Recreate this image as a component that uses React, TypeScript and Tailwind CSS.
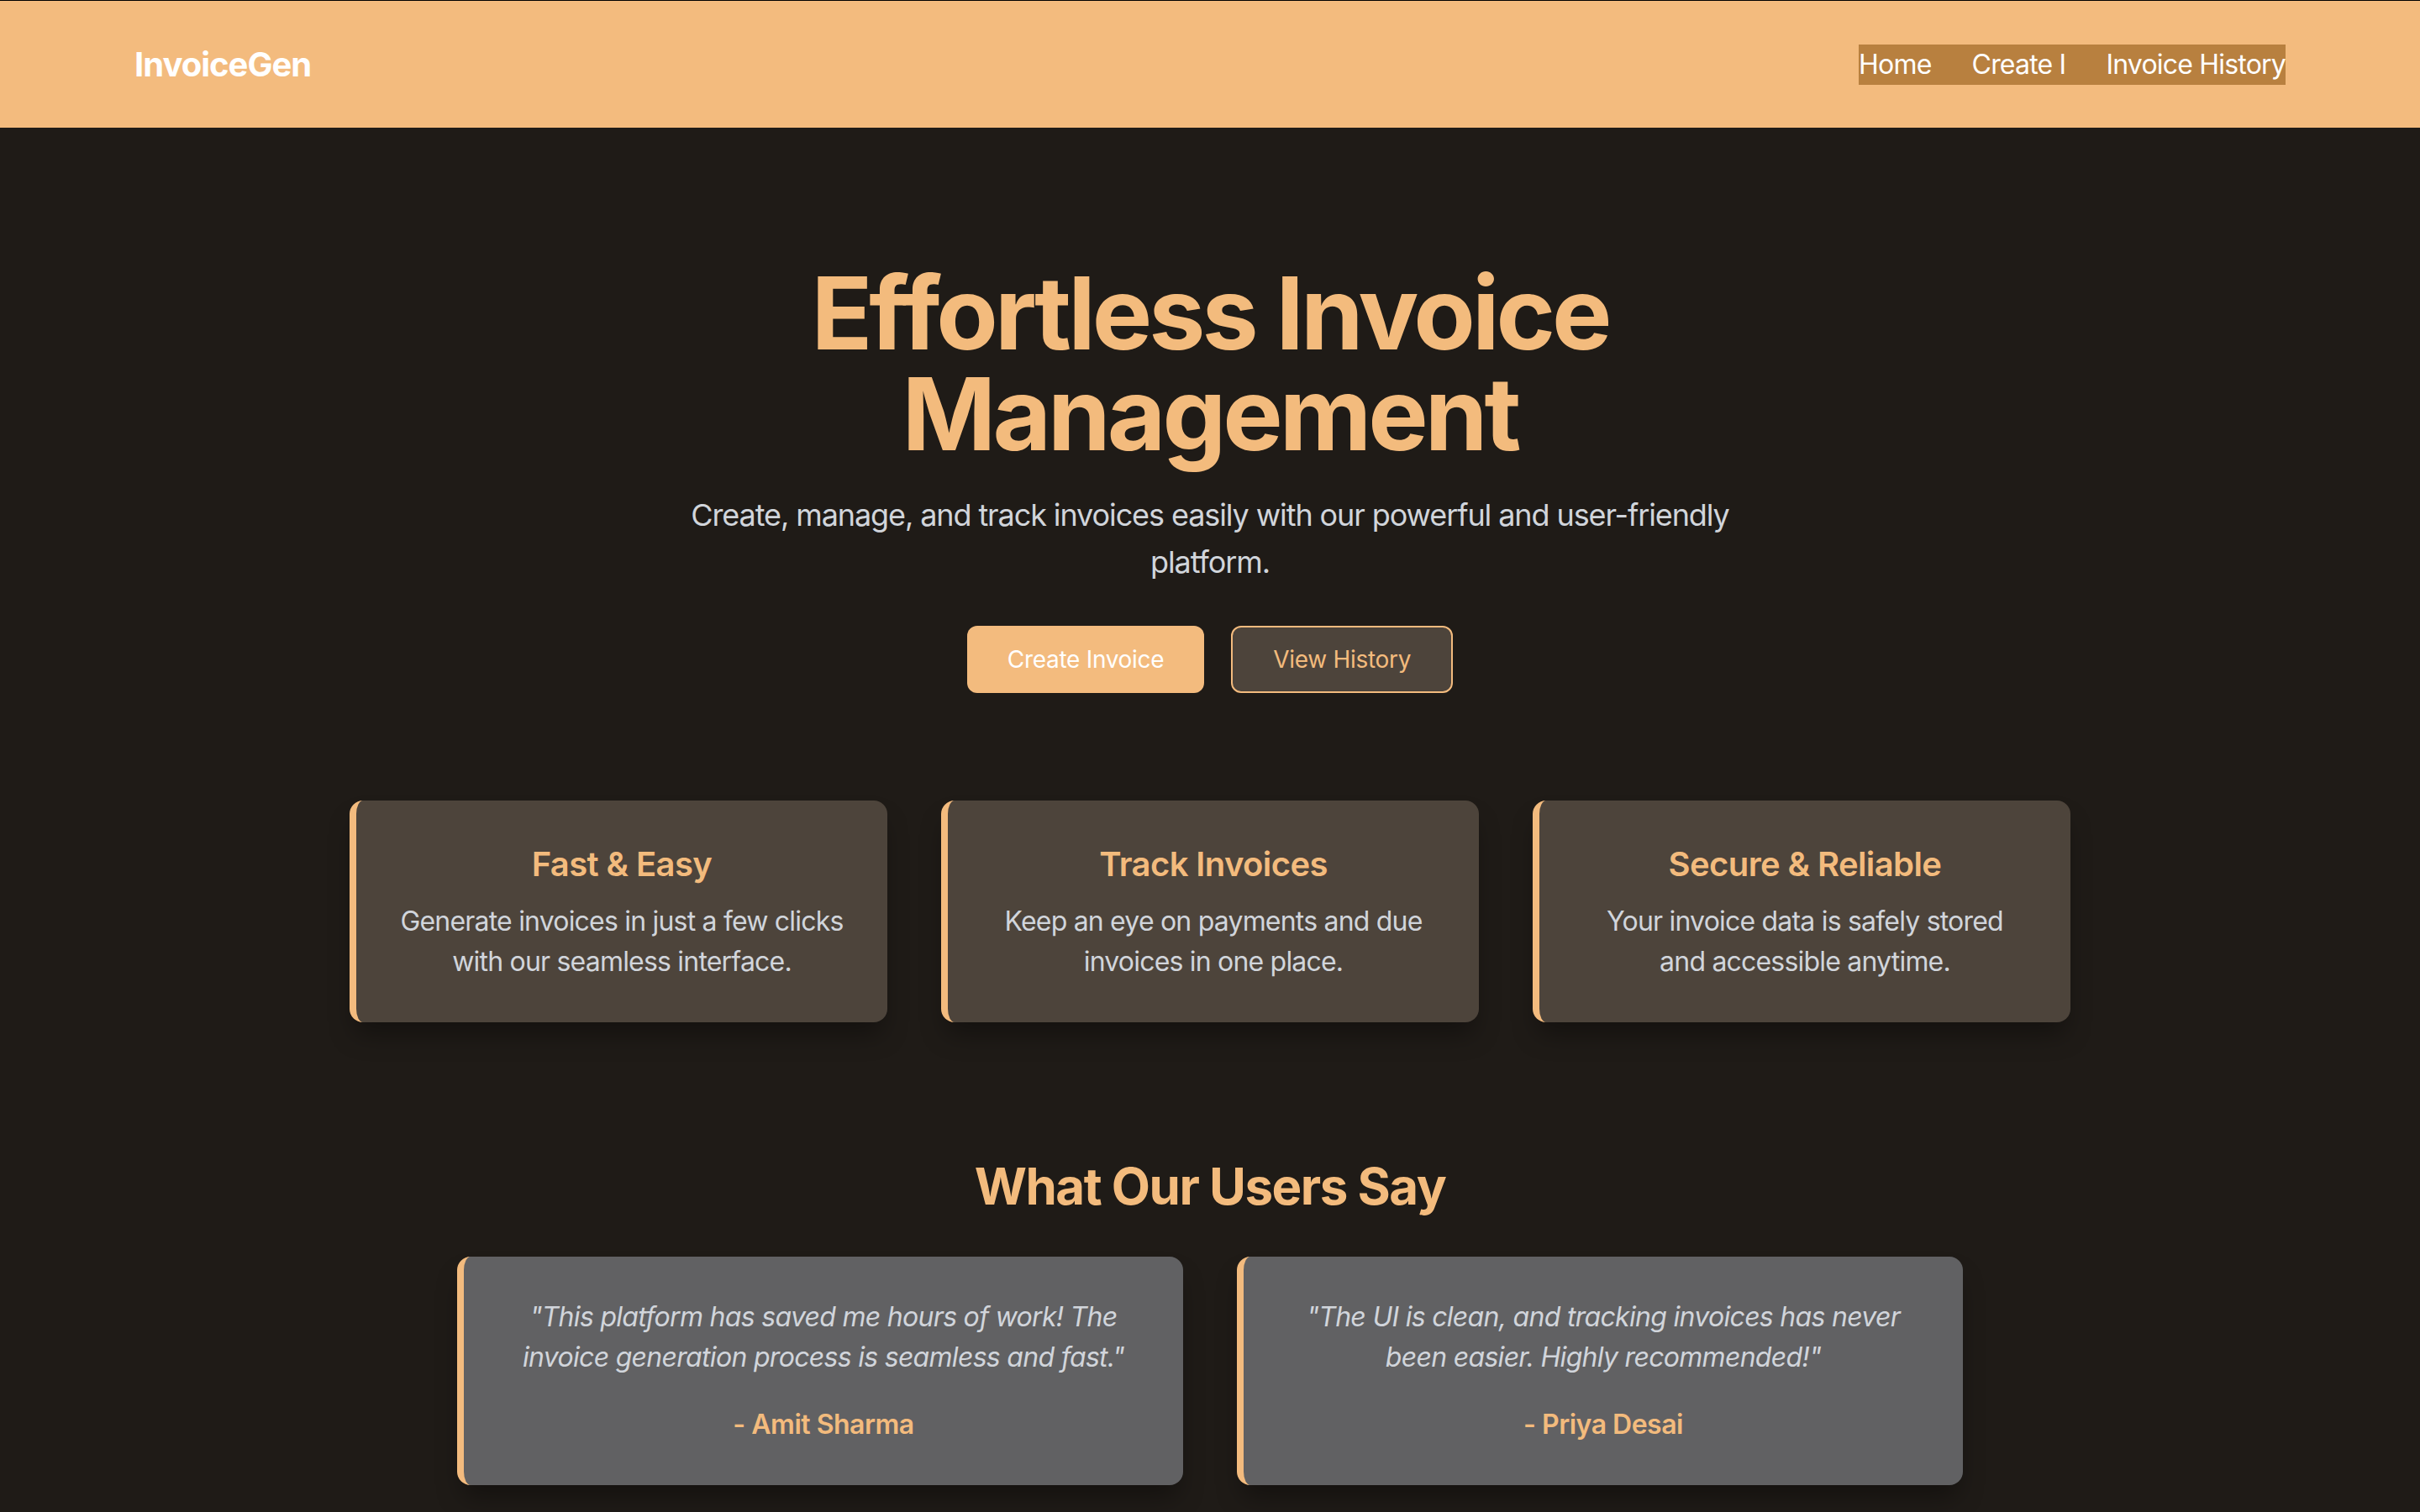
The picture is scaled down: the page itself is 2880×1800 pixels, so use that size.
export default function App() {
  const features = [
    {
      title: "Fast & Easy",
      lines: ["Generate invoices in just a few clicks", "with our seamless interface."],
    },
    {
      title: "Track Invoices",
      lines: ["Keep an eye on payments and due", "invoices in one place."],
    },
    {
      title: "Secure & Reliable",
      lines: ["Your invoice data is safely stored", "and accessible anytime."],
    },
  ];
  const reviews = [
    {
      quote:
        '"This platform has saved me hours of work! The invoice generation process is seamless and fast."',
      name: "- Amit Sharma",
    },
    {
      quote:
        '"The UI is clean, and tracking invoices has never been easier. Highly recommended!"',
      name: "- Priya Desai",
    },
  ];

  return (
    <div className="min-h-screen bg-[#1f1b17] font-['Inter',sans-serif] pb-[160px]">
      {/* navbar */}
      <nav className="h-[152px] border-t border-black bg-[#f3bb7e] px-[160px] flex items-center justify-between">
        <h1 className="text-[40px] leading-[56px] font-bold text-white tracking-[-1px]">InvoiceGen</h1>
        <div className="flex gap-[48px] bg-[#b8803f] text-[32px] leading-[48px] text-white tracking-[-0.8px]">
          <a>Home</a>
          <a>Create I</a>
          <a>Invoice History</a>
        </div>
      </nav>

      {/* hero */}
      <section className="pt-[161px] text-center">
        <h1 className="text-[120px] leading-[120px] font-bold text-[#f3bb7d] tracking-[-4px]">
          Effortless Invoice
          <br />
          Management
        </h1>
        <p className="mt-[32px] mx-auto max-w-[1344px] text-[36px] leading-[56px] text-[#d1d5db] tracking-[-1.1px]">
          Create, manage, and track invoices easily with our powerful and user-friendly platform.
        </p>
        <div className="mt-[48px] flex justify-center gap-[32px] tracking-[-0.3px]">
          <button className="bg-[#f3bb7e] text-white text-[28px] leading-[40px] px-[48px] py-[20px] rounded-[12px]">
            Create Invoice
          </button>
          <button className="bg-[#4d443b] text-[#f3bb7d] border-2 border-[#f3bb7e] text-[28px] leading-[40px] px-[48px] py-[18px] rounded-[12px]">
            View History
          </button>
        </div>
      </section>

      {/* features */}
      <section className="mt-[128px] mx-auto max-w-[2048px] grid grid-cols-3 gap-[64px]">
        {features.map((f, i) => (
          <div
            key={i}
            className="bg-[#4d443b] border-l-[8px] border-[#f3bb7e] rounded-[16px] p-[48px] text-center shadow-[0_20px_30px_-6px_rgba(0,0,0,0.35)]"
          >
            <h2 className="text-[40px] leading-[56px] font-semibold text-[#f3bb7d] tracking-[-0.6px]">{f.title}</h2>
            <p className="mt-[16px] text-[32px] leading-[48px] text-[#d1d5db] tracking-[-0.8px]">
              {f.lines[0]}
              <br />
              {f.lines[1]}
            </p>
          </div>
        ))}
      </section>

      {/* testimonials */}
      <section className="mt-[159px] text-center">
        <h2 className="text-[60px] leading-[72px] font-bold text-[#f3bb7d] tracking-[-1.5px]">What Our Users Say</h2>
        <div className="mt-[48px] mx-auto max-w-[1792px] grid grid-cols-2 gap-[64px]">
          {reviews.map((r, i) => (
            <div
              key={i}
              className="bg-[#616163] border-l-[8px] border-[#f3bb7e] rounded-[16px] p-[48px] shadow-[0_20px_30px_-6px_rgba(0,0,0,0.35)]"
            >
              <p className="text-[32px] leading-[48px] italic text-[#d1d5db] tracking-[-0.7px]">{r.quote}</p>
              <p className="mt-[32px] text-[32px] leading-[48px] font-semibold text-[#f3bb7d] tracking-[-0.5px]">{r.name}</p>
            </div>
          ))}
        </div>
      </section>
    </div>
  );
}
